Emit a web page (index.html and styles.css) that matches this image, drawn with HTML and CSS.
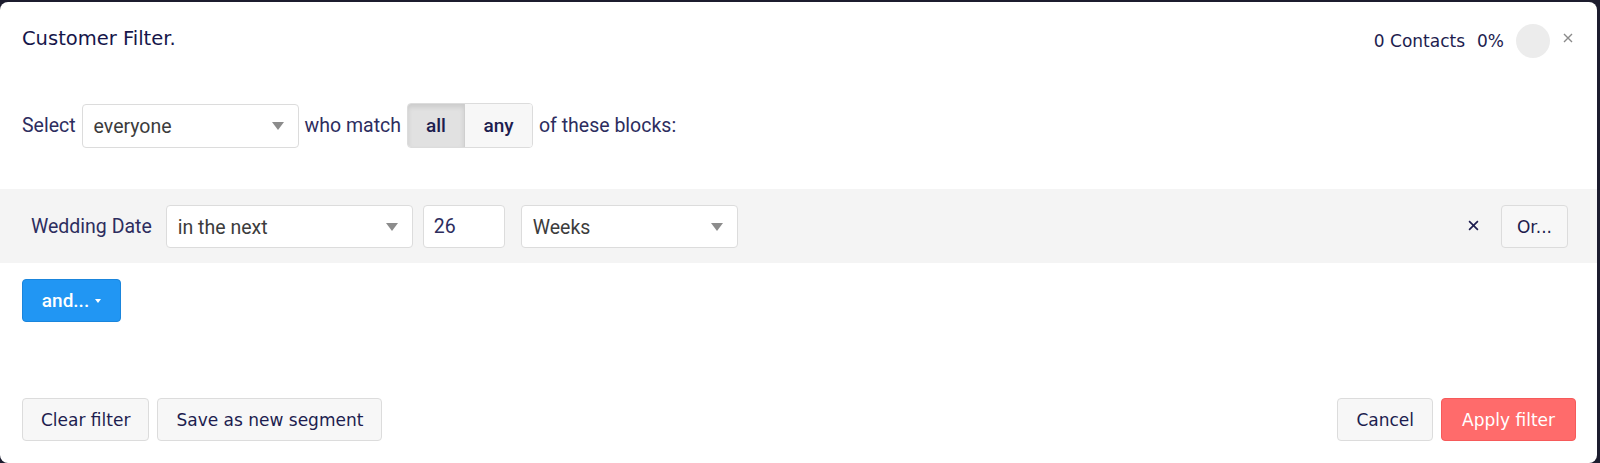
FILE: index.html
```html
<!DOCTYPE html>
<html lang="en">
<head>
    <meta charset="UTF-8">
    <meta name="viewport" content="width=device-width, initial-scale=1.0">
    <title>Customer Filter</title>
    <link rel="stylesheet" href="styles.css">
</head>
<body>
    <div class="modal">
        <!-- Header -->
        <header class="modal-header">
            <h1>Customer Filter.</h1>
            <span class="stat">0 Contacts</span>
            <span class="stat">0%</span>
            <span class="progress"></span>
            <button class="close" aria-label="Close">
                <svg width="10" height="10" viewBox="0 0 10 10"><path d="M1 1L9 9M9 1L1 9" stroke="#8a8a8a" stroke-width="1.4"/></svg>
            </button>
        </header>

        <!-- Match selector -->
        <section class="match-row">
            <span class="label">Select</span>
            <div class="select select-everyone"><span>everyone</span><i class="caret"></i></div>
            <span class="label">who match</span>
            <div class="toggle">
                <button class="active">all</button>
                <button>any</button>
            </div>
            <span class="label">of these blocks:</span>
        </section>

        <!-- Filter block -->
        <section class="block">
            <span class="label">Wedding Date</span>
            <div class="select select-when"><span>in the next</span><i class="caret"></i></div>
            <input class="number" type="text" value="26">
            <div class="select select-unit"><span>Weeks</span><i class="caret"></i></div>
            <div class="spacer"></div>
            <button class="remove" aria-label="Remove">
                <svg width="11" height="11" viewBox="0 0 10 10"><path d="M1 1L9 9M9 1L1 9" stroke="#1d1d4f" stroke-width="1.5"/></svg>
            </button>
            <button class="btn">Or...</button>
        </section>

        <div class="and-row">
            <button class="btn-and">and... <i class="caret caret-white"></i></button>
        </div>

        <!-- Footer -->
        <footer class="modal-footer">
            <div class="group">
                <button class="btn">Clear filter</button>
                <button class="btn">Save as new segment</button>
            </div>
            <div class="group">
                <button class="btn">Cancel</button>
                <button class="btn btn-apply">Apply filter</button>
            </div>
        </footer>
    </div>
</body>
</html>
```

FILE: styles.css
```css
body {
    margin: 0;
    padding: 0;
    background-color: #1c1c2e;
    height: 463px;
    overflow: hidden;
}
.modal {
    margin-top: 2px;
    width: 1597px;
    height: 461px;
    background-color: #fff;
    border-radius: 8px;
    display: flex;
    flex-direction: column;
    font-family: "DejaVu Sans", sans-serif;
    color: #1d1d4f;
}
.modal-header {
    display: flex;
    align-items: center;
    padding: 21px 24px 0 22px;
    height: 36px;
}
.modal-header h1 {
    flex: 1;
    margin: 0;
    font-size: 19.5px;
    font-weight: normal;
    margin-top: -6px;
    color: #16164a;
}
.stat {
    font-size: 17px;
    margin-left: 12px;
}
.progress {
    width: 34px;
    height: 34px;
    border-radius: 50%;
    background-color: #ececec;
    margin-left: 12px;
}
.close {
    border: none;
    background: none;
    padding: 0;
    margin-left: 13px;
    align-self: flex-start;
    margin-top: 8px;
    cursor: pointer;
}
.label {
    font-family: Roboto, sans-serif;
    font-size: 19.5px;
    color: #2d2d5e;
}
.match-row {
    display: flex;
    align-items: center;
    padding: 0 22px;
    margin-top: 44px;
    gap: 6px;
}
.select {
    box-sizing: border-box;
    height: 44px;
    display: flex;
    align-items: center;
    justify-content: space-between;
    padding: 0 14px 0 11px;
    border: 1px solid #dcdcdc;
    border-radius: 4px;
    background-color: #fff;
    font-family: Roboto, sans-serif;
    font-size: 19.5px;
    color: #3c3c3c;
}
.select span {
    margin-top: 2px;
}
.caret {
    width: 0;
    height: 0;
    border-left: 6px solid transparent;
    border-right: 6px solid transparent;
    border-top: 8px solid #8c8c8c;
}
.select-everyone {
    width: 217px;
}
.toggle {
    display: flex;
    height: 45px;
    border: 1px solid #dcdcdc;
    border-radius: 4px;
    overflow: hidden;
    box-sizing: border-box;
}
.toggle button {
    border: none;
    background-color: #f7f7f7;
    font-family: Roboto, sans-serif;
    font-size: 19px;
    font-weight: 500;
    color: #1d1d4f;
    padding: 0;
    width: 67px;
    cursor: pointer;
}
.toggle button.active {
    width: 57px;
    background-color: #e1e1e1;
    border-right: 1px solid #cfcfcf;
    box-shadow: inset 0 3px 5px rgba(0, 0, 0, 0.1);
}
.block {
    display: flex;
    align-items: center;
    margin-top: 41px;
    padding: 16px 29px 15px 31px;
    background-color: #f4f4f4;
}
.block .label {
    margin-right: 14px;
}
.block .select {
    height: 43px;
}
.select-when {
    width: 247px;
}
.number {
    box-sizing: border-box;
    width: 82px;
    height: 43px;
    margin-left: 10px;
    padding: 0 10px;
    border: 1px solid #dcdcdc;
    border-radius: 4px;
    font-family: Roboto, sans-serif;
    font-size: 19.5px;
    color: #2d2d5e;
}
.select-unit {
    width: 217px;
    margin-left: 16px;
}
.spacer {
    flex: 1;
}
.remove {
    border: none;
    background: none;
    padding: 0 4px;
    margin-right: 18px;
    cursor: pointer;
}
.btn {
    box-sizing: border-box;
    height: 43px;
    padding: 0 18px;
    font-family: "DejaVu Sans", sans-serif;
    font-size: 17px;
    color: #1d1d4f;
    background-color: #f7f7f7;
    border: 1px solid #dcdcdc;
    border-radius: 4px;
    cursor: pointer;
}
.block .btn {
    padding: 0 15px;
}
.and-row {
    padding: 16px 22px 0;
}
.btn-and {
    box-sizing: border-box;
    width: 99px;
    height: 43px;
    background-color: #2196f3;
    border: 1px solid #1a85dc;
    border-radius: 4px;
    color: #fff;
    font-family: Roboto, sans-serif;
    font-size: 19px;
    font-weight: 500;
    display: flex;
    align-items: center;
    justify-content: center;
    gap: 6px;
    cursor: pointer;
}
.caret-white {
    border-left-width: 3.5px;
    border-right-width: 3.5px;
    border-top: 4px solid #fff;
}
.modal-footer {
    margin-top: auto;
    margin-bottom: 22px;
    display: flex;
    justify-content: space-between;
    padding: 0 21px 0 22px;
}
.group {
    display: flex;
    gap: 8px;
}
.btn-apply {
    background-color: #ff6b6b;
    border-color: #f65a5a;
    color: #fff;
    padding: 0 20px;
}
```
